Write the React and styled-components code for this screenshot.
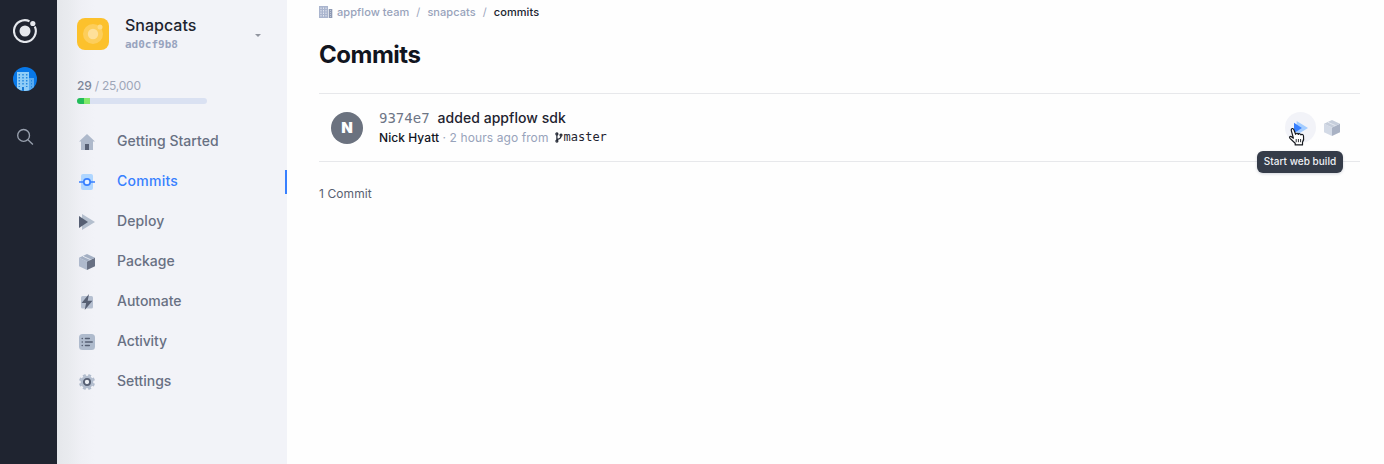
import React from "react";
import styled, { createGlobalStyle } from "styled-components";

const GlobalStyle = createGlobalStyle`
  *, *::before, *::after { box-sizing: border-box; }
  body {
    margin: 0;
    background: #fefefe;
    font-family: Inter, "Liberation Sans", sans-serif;
    color: #11151f;
    overflow: hidden;
    -webkit-font-smoothing: antialiased;
  }
  svg { display: block; flex: none; }
`;

const mono = `"DejaVu Sans Mono", "Liberation Mono", monospace`;

const Page = styled.div`
  display: flex;
  width: 100%;
  height: 464px;
`;

const Rail = styled.aside`
  display: flex;
  flex-direction: column;
  align-items: center;
  width: 57px;
  flex: none;
  padding: 19px 7px 0 0;
  background: #1f2430;
`;

const RailItem = styled.div`
  display: flex;
  margin-bottom: ${(p) => p.$gap}px;
`;

const Sidebar = styled.aside`
  display: flex;
  flex-direction: column;
  width: 230px;
  flex: none;
  background: linear-gradient(90deg, #e5e7eb 0, #e9ebef 12px, #eff0f5 24px, #f2f3f8 38px);
`;

const AppHeader = styled.div`
  display: flex;
  align-items: center;
  height: 34px;
  margin: 17px 26px 0 20px;
`;

const AppInfo = styled.div`
  flex: 1;
  margin-left: 16px;
`;

const AppName = styled.div`
  font-size: 16px;
  line-height: 18px;
  font-weight: 500;
  letter-spacing: 0;
  color: #20242f;
`;

const AppId = styled.div`
  padding-top: 2px;
  font: bold 11px/17px ${mono};
  color: #98a3be;
`;

const Caret = styled.span`
  margin-top: 2px;
  border: 3px solid transparent;
  border-top: 3px solid #91959f;
  border-bottom: 0;
`;

const Usage = styled.div`
  margin: 26px 0 0 20px;
  width: 130px;
  font-size: 12px;
  line-height: 18px;
  letter-spacing: -0.22px;
  color: #9ea6b8;
`;

const Used = styled.span`
  font-weight: 500;
  color: #7c8598;
`;

const Meter = styled.div`
  display: flex;
  height: 6px;
  margin-top: 3px;
  overflow: hidden;
  border-radius: 3px;
  background: #dae1f2;
`;

const MeterPart = styled.span`
  width: ${(p) => p.$width}px;
  background: ${(p) => p.$color};
`;

const Nav = styled.nav`
  display: flex;
  flex-direction: column;
  margin-top: 16px;
`;

const NavItem = styled.a`
  display: flex;
  align-items: center;
  gap: 20px;
  height: 40px;
  padding-left: 20px;
  font-size: 14px;
  font-weight: 500;
  letter-spacing: ${(p) => p.$spacing}px;
  color: ${(p) => (p.$active ? "#3880ff" : "#687083")};
`;

const NavIcon = styled.svg.attrs({ width: 20, height: 20, viewBox: "-2 -4 20 20" })``;

const NavLabel = styled.span`
  flex: 1;
`;

const ActiveBar = styled.span`
  width: 2px;
  height: 24px;
  margin-top: 4px;
  background: #3880ff;
`;

const Main = styled.main`
  flex: 1;
  padding: 4px 24px 0 32px;
`;

const Breadcrumb = styled.div`
  display: flex;
  align-items: center;
  height: 16px;
  font-size: 11px;
  font-weight: 500;
  letter-spacing: 0.07px;
  color: #9aa4bc;
`;

const Crumb = styled.span`
  color: ${(p) => (p.$current ? "#20242f" : "#98a3bb")};
`;

const Slash = styled.span`
  width: 18px;
  text-align: center;
  font-weight: 400;
`;

const Title = styled.h1`
  margin: 19px 0 23px;
  font-size: 24px;
  line-height: 31px;
  font-weight: 700;
  letter-spacing: -0.5px;
  color: #11151f;
`;

const CommitRow = styled.section`
  display: flex;
  align-items: center;
  height: 69px;
  padding: 0 12px;
  border-top: 1px solid #e7e8eb;
  border-bottom: 1px solid #e7e8eb;
`;

const Avatar = styled.div`
  display: flex;
  align-items: center;
  justify-content: center;
  width: 32px;
  height: 32px;
  border-radius: 50%;
  background: #6b727f;
  color: #fff;
  font-size: 15px;
  font-weight: 900;
`;

const CommitText = styled.div`
  flex: 1;
  margin: -1px 0 0 16px;
`;

const CommitTitle = styled.div`
  display: flex;
  align-items: baseline;
  line-height: 19px;
  font-size: 14px;
  font-weight: 500;
  letter-spacing: 0.04px;
  color: #1f2430;
`;

const Hash = styled.span`
  margin-right: 8px;
  font: 14px/19px ${mono};
  letter-spacing: 0;
  color: #6d7585;
`;

const CommitMeta = styled.div`
  display: flex;
  align-items: center;
  height: 18px;
  font-size: 12px;
  white-space: pre;
  color: #98a3bb;
`;

const Author = styled.span`
  font-weight: 500;
  letter-spacing: 0.07px;
  color: #11151f;
`;

const When = styled.span`
  letter-spacing: 0.09px;
`;

const Branch = styled.span`
  display: flex;
  align-items: center;
  margin-left: 6px;
  gap: 1px;
  font: 12px/18px ${mono};
  color: #1f2430;
`;

const Actions = styled.div`
  display: flex;
  align-items: center;
  padding-right: 8px;
  gap: 8px;
`;

const BuildButton = styled.div`
  position: relative;
  display: flex;
  align-items: center;
  justify-content: center;
  width: 31px;
  height: 31px;
  border-radius: 50%;
  background: #f2f3f8;
`;

const Tooltip = styled.div`
  position: absolute;
  top: 39px;
  left: -28px;
  width: 86px;
  height: 22px;
  border-radius: 6px;
  background: #353c49;
  color: #eef0f4;
  font-size: 10px;
  font-weight: 500;
  line-height: 21px;
  letter-spacing: 0.02px;
  text-align: center;
  white-space: nowrap;
  box-shadow: 0 1px 3px rgba(40, 55, 85, 0.2);
`;

const Pointer = styled.svg`
  position: absolute;
  left: 2px;
  top: 15px;
`;

const Total = styled.div`
  margin-top: 24px;
  font-size: 12px;
  line-height: 16px;
  letter-spacing: 0.1px;
  color: #596171;
`;

const Logo = () => (
  <svg width="24" height="24" viewBox="0 0 24 24">
    <circle cx="12" cy="12" r="5.5" fill="#e5e8ed" />
    <path d="M16.5 2.2A10.9 10.9 0 1 0 21.8 7.5" fill="none" stroke="#e5e8ed" strokeWidth="2.1" />
    <circle cx="19.8" cy="4.5" r="2.6" fill="#e5e8ed" />
  </svg>
);

const TeamIcon = () => (
  <svg width="24" height="24" viewBox="0 0 24 24">
    <defs>
      <clipPath id="disc"><circle cx="12" cy="12" r="12" /></clipPath>
    </defs>
    <g clipPath="url(#disc)">
      <path fill="#0878e8" d="M0 0h24v24H0z" />
      <path fill="#90cdf7" d="M4 5h12v19H4z" />
      <path fill="#58aaf0" d="M16 11h5v13h-5z" />
      <path stroke="#2488df" strokeWidth="1.5" strokeDasharray="1.5 1.5" d="M6.3 7v13M10 7v11M13.7 7v13" />
      <path stroke="#2488df" strokeWidth="1" strokeDasharray="1.5 1.5" d="M18.5 13v9" />
      <path fill="#1678d5" d="M9 20h2v4H9z" />
    </g>
  </svg>
);

const SearchIcon = () => (
  <svg width="18" height="18" viewBox="0 0 18 18" fill="none" stroke="#98a0ad" strokeWidth="1.35">
    <circle cx="7.6" cy="7.4" r="5.9" />
    <path d="m11.9 11.7 5 4.8" />
  </svg>
);

const AppIcon = () => (
  <svg width="32" height="32" viewBox="0 0 32 32">
    <rect width="32" height="32" rx="8" fill="#fcc12c" />
    <circle cx="16" cy="16" r="10" fill="#fdce5b" />
    <circle cx="16" cy="16" r="5.2" fill="#fee09a" />
    <circle cx="23" cy="9" r="2.5" fill="#fddb84" />
  </svg>
);

const HomeIcon = () => (
  <>
    <path fill="#aeb9cb" d="M8 0 0 7.5h2V16h12V7.5h2z" />
    <path fill="#565f73" d="M6 10h4v6H6z" />
  </>
);

const CommitsIcon = () => (
  <>
    <rect x="2" width="12" height="16" rx="2" fill="#afd6ff" />
    <path stroke="#3880ff" strokeWidth="1.7" d="M0 8h4.5M11.5 8H16" />
    <circle cx="8" cy="8" r="3.2" fill="#e7f2ff" stroke="#3880ff" strokeWidth="1.7" />
  </>
);

const DeployIcon = ({ dark = "#565f73", light = "#b4bfce" }) => (
  <>
    <path fill={light} d="m3 0 13 8-13 8z" />
    <path fill={dark} d="m0 2 9 6-9 6z" />
  </>
);

const PackageIcon = ({ side = "#687083", front = "#afbacd", top = "#a3afc3" }) => (
  <>
    <path fill={front} d="m0 3.7 8 3.8V16l-8-3.8z" />
    <path fill={side} d="m16 3.7-8 3.8V16l8-3.8z" />
    <path fill={top} d="m0 3.7 8-3.6 8 3.6-8 3.8z" />
    <path stroke="#e3e8f0" strokeWidth="1" d="m3.8 2.2 7.8 3.5" fill="none" />
  </>
);

const AutomateIcon = () => (
  <>
    <rect x="2" y="2" width="12" height="12.5" rx="1.5" fill="#b5bfd0" />
    <path fill="#565f73" d="M10 0 2.6 9h4.5L5.7 16l7.8-9.2H8.7z" />
  </>
);

const ActivityIcon = () => (
  <>
    <rect width="16" height="16" rx="3.5" fill="#afbbcd" />
    <g stroke="#565f73" strokeWidth="1.5" strokeLinecap="round">
      <path d="M3.2 4.5h.1M3.2 8h.1M3.2 11.5h.1M6.5 4.5h3.8M6.5 8h6.7M6.5 11.5h3.8" />
    </g>
  </>
);

const SettingsIcon = () => (
  <>
    <circle cx="8" cy="8" r="6.3" fill="#b1bccd" />
    <g stroke="#b1bccd" strokeWidth="3">
      <path d="M8 2V0M8 14v2M2 8H0M14 8h2" transform="rotate(22.5 8 8)" />
      <path d="M8 2V0M8 14v2M2 8H0M14 8h2" transform="rotate(67.5 8 8)" />
    </g>
    <circle cx="8" cy="8" r="3.1" fill="#edf0f5" stroke="#565f73" strokeWidth="1.9" />
  </>
);

const BuildingIcon = () => (
  <svg width="18" height="14" viewBox="0 0 18 14">
    <path fill="#aab5ce" d="M0 1h9v12H0z" />
    <path stroke="#e3e7f0" strokeWidth="1" strokeDasharray="1.5 1" d="M2 2.5v9M4.5 2.5v9M7 2.5v9" />
    <path fill="#8e99b3" d="M9.7 4h3.6v9H9.7z" />
    <path stroke="#c0c8d8" strokeWidth="1" strokeDasharray="1 1" d="M11.5 5v7" />
  </svg>
);

const BranchIcon = () => (
  <svg width="8" height="12" viewBox="0 0 8 12" fill="none" stroke="#1f2430" strokeWidth="1.2">
    <circle cx="1.9" cy="2.9" r="1" />
    <circle cx="1.9" cy="10.1" r="1" />
    <circle cx="6" cy="4.1" r="1" />
    <path d="M1.9 3.9v5.2M6 5.1c0 2.4-1.2 3-4.1 3.6" />
  </svg>
);

const HandPointer = () => (
  <Pointer width="20" height="20" viewBox="0 0 20 20">
    <path
      fill="#fff"
      stroke="#15181e"
      strokeWidth="1.2"
      strokeLinejoin="round"
      d="M6.4 11.2 4.3 3.6C3.8 1.3 6.2.7 6.9 2.8l1.7 4.5c.3-1.5 2.3-1.3 2.7.2.5-1.3 2.2-.9 2.6.4.9-1 2.4-.3 2.6 1.1.5 2.5.2 4.3-1 6.3v2.6H8.2v-1.6L3 11.4c-1.2-1.6.5-2.9 1.8-1.4z"
    />
    <path stroke="#15181e" strokeWidth="0.9" d="M9.2 12v3.2M11.4 12v3.2M13.6 12v3.2" />
  </Pointer>
);

const navItems = [
  { label: "Getting Started", Icon: HomeIcon, spacing: 0.03 },
  { label: "Commits", Icon: CommitsIcon, active: true, spacing: 0.26 },
  { label: "Deploy", Icon: DeployIcon, spacing: 0.1 },
  { label: "Package", Icon: PackageIcon, spacing: 0.02 },
  { label: "Automate", Icon: AutomateIcon, spacing: -0.03 },
  { label: "Activity", Icon: ActivityIcon, spacing: -0.13 },
  { label: "Settings", Icon: SettingsIcon, spacing: -0.03 },
];

export default function App() {
  return (
    <Page>
      <GlobalStyle />
      <Rail>
        <RailItem $gap={24}><Logo /></RailItem>
        <RailItem $gap={37}><TeamIcon /></RailItem>
        <RailItem $gap={0}><SearchIcon /></RailItem>
      </Rail>
      <Sidebar>
        <AppHeader>
          <AppIcon />
          <AppInfo>
            <AppName>Snapcats</AppName>
            <AppId>ad0cf9b8</AppId>
          </AppInfo>
          <Caret />
        </AppHeader>
        <Usage>
          <Used>29</Used> / 25,000
          <Meter>
            <MeterPart $width={7} $color="#23bd59" />
            <MeterPart $width={6} $color="#83e96b" />
          </Meter>
        </Usage>
        <Nav>
          {navItems.map(({ label, Icon, active, spacing }) => (
            <NavItem key={label} $active={active} $spacing={spacing}>
              <NavIcon><Icon /></NavIcon>
              <NavLabel>{label}</NavLabel>
              {active && <ActiveBar />}
            </NavItem>
          ))}
        </Nav>
      </Sidebar>
      <Main>
        <Breadcrumb>
          <BuildingIcon />
          <Crumb>appflow team</Crumb>
          <Slash>/</Slash>
          <Crumb>snapcats</Crumb>
          <Slash>/</Slash>
          <Crumb $current>commits</Crumb>
        </Breadcrumb>
        <Title>Commits</Title>
        <CommitRow>
          <Avatar>N</Avatar>
          <CommitText>
            <CommitTitle><Hash>9374e7</Hash>added appflow sdk</CommitTitle>
            <CommitMeta>
              <Author>Nick Hyatt</Author>
              <When> · 2 hours ago from</When>
              <Branch><BranchIcon />master</Branch>
            </CommitMeta>
          </CommitText>
          <Actions>
            <BuildButton>
              <svg width="14" height="14" viewBox="0 0 16 16"><DeployIcon dark="#3880ff" light="#a4cdff" /></svg>
              <Tooltip>Start web build</Tooltip>
              <HandPointer />
            </BuildButton>
            <svg width="16" height="16" viewBox="0 0 16 16">
              <PackageIcon side="#a9b2c4" front="#d3dae6" top="#c6cedb" />
            </svg>
          </Actions>
        </CommitRow>
        <Total>1 Commit</Total>
      </Main>
    </Page>
  );
}
